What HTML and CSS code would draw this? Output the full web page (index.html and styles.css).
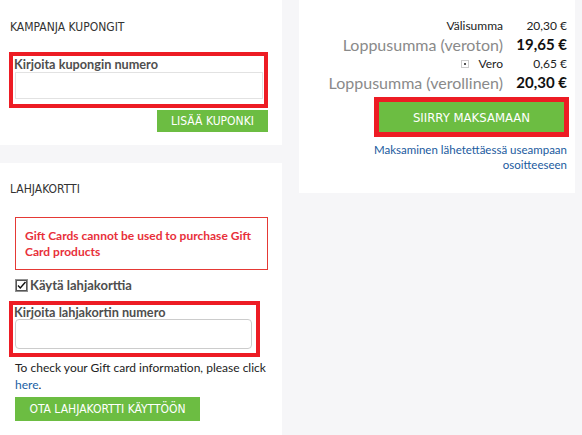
FILE: index.html
```html
<html>
  <head>
    <meta charset="UTF-8" />
    <meta name="viewport" content="width=device-width, initial-scale=1.0" />
    <title>Ostoskori</title>

    <link rel="stylesheet" href="styles.css">
  </head>

  <body>
    <div class="page">
      <div class="left-column">
        <div class="panel coupon-panel">
          <div class="panel-title">KAMPANJA KUPONGIT</div>

          <div class="highlight coupon-field">
            <div class="field-label">Kirjoita kupongin numero</div>
            <input type="text" class="text-input coupon-input" />
          </div>

          <div class="actions">
            <button class="btn btn-coupon">LISÄÄ KUPONKI</button>
          </div>
        </div>

        <div class="panel gift-panel">
          <div class="panel-title">LAHJAKORTTI</div>

          <div class="error-box">Gift Cards cannot be used to purchase Gift Card products</div>

          <div class="check-row">
            <svg class="check-box" width="13" height="13" viewBox="0 0 13 13">
              <rect x="0.5" y="0.5" width="12" height="12" fill="#fff" stroke="#222" stroke-dasharray="1 1" />
              <rect x="1.5" y="1.5" width="10" height="10" fill="none" stroke="#555" />
              <path d="M3 6.5 L5.3 9 L10.5 3" fill="none" stroke="#111" stroke-width="1.4" />
            </svg>
            <span class="check-label">Käytä lahjakorttia</span>
          </div>

          <div class="highlight gift-field">
            <div class="field-label">Kirjoita lahjakortin numero</div>
            <input type="text" class="text-input gift-input" />
          </div>

          <div class="gift-info">To check your Gift card information, please click <a href="" class="link">here</a>.</div>

          <button class="btn btn-gift">OTA LAHJAKORTTI KÄYTTÖÖN</button>
        </div>
      </div>

      <div class="panel summary-panel">
        <div class="totals">
          <div class="total-label small">Välisumma</div>
          <div class="total-value small">20,30 €</div>

          <div class="total-label large">Loppusumma (veroton)</div>
          <div class="total-value large">19,65 €</div>

          <div class="total-label small">
            <svg class="tax-toggle" width="8" height="8" viewBox="0 0 8 8">
              <rect x="0.5" y="0.5" width="7" height="7" fill="none" stroke="#999" stroke-dasharray="1 1" />
              <rect x="3" y="3" width="2" height="2" fill="#555" />
            </svg>
            Vero
          </div>
          <div class="total-value small">0,65 €</div>

          <div class="total-label large">Loppusumma (verollinen)</div>
          <div class="total-value large">20,30 €</div>
        </div>

        <div class="checkout-highlight">
          <button class="btn btn-checkout">SIIRRY MAKSAMAAN</button>
        </div>

        <a href="" class="multi-link">Maksaminen lähetettäessä useampaan<br>osoitteeseen</a>
      </div>
    </div>
  </body>
</html>
```

FILE: styles.css
```css
body {
  margin: 0;
  background-color: #f6f6f8;
  font-family: Lato, "Noto Sans", sans-serif;
  color: #222;
}

.page {
  display: flex;
  flex-direction: row;
  align-items: flex-start;
  gap: 17px;
}

.left-column {
  width: 282px;
  display: flex;
  flex-direction: column;
  gap: 18px;
}

.panel {
  background-color: #fff;
  box-sizing: border-box;
}

.panel-title {
  font-family: "Liberation Sans Narrow", "DejaVu Sans Condensed", sans-serif;
  font-size: 12px;
  line-height: 16px;
  color: #333;
  margin-left: 1px;
}

.highlight {
  border: 4px solid #ed1c24;
  display: flex;
  flex-direction: column;
  align-items: flex-start;
}

.field-label {
  font-size: 12.7px;
  font-weight: bold;
  color: #4e4e4e;
  margin-left: -1px;
}

.text-input {
  box-sizing: border-box;
  background-color: #fff;
  outline: none;
}

.btn {
  border: none;
  background-color: #6cbd42;
  color: #fff;
  font-family: "Liberation Sans Narrow", "DejaVu Sans Condensed", sans-serif;
  padding: 0;
  cursor: pointer;
}

/* kupongit */
.coupon-panel {
  height: 145px;
  padding: 19px 14px 0 9px;
}

.coupon-field {
  margin-top: 17px;
  padding: 0 5px 5px 2px;
}

.coupon-field .field-label {
  line-height: 16px;
}

.coupon-input {
  width: 248px;
  height: 27px;
  border: 1px solid #e2e2e2;
}

.actions {
  display: flex;
  justify-content: flex-end;
  margin-top: 2px;
}

.btn-coupon {
  width: 111px;
  height: 22px;
  font-size: 12px;
}

/* lahjakortti */
.gift-panel {
  height: 272px;
  padding: 18px 0 0 9px;
}

.error-box {
  width: 253px;
  box-sizing: border-box;
  margin: 20px 0 0 6px;
  padding: 10px 6px 9px 9px;
  border: 1px solid #e53935;
  color: #e8303a;
  font-size: 12px;
  font-weight: bold;
  line-height: 16px;
}

.check-row {
  display: flex;
  flex-direction: row;
  align-items: center;
  margin: 7px 0 0 6px;
  height: 16px;
}

.check-box {
  margin-right: 2px;
}

.check-label {
  font-size: 13px;
  font-weight: bold;
  color: #4e4e4e;
}

.gift-field {
  width: 251px;
  box-sizing: border-box;
  margin-top: 8px;
  padding: 0 4px 4px 2px;
}

.gift-field .field-label {
  line-height: 14px;
}

.gift-input {
  width: 237px;
  height: 30px;
  border: 1px solid #ccc;
  border-radius: 4px;
}

.gift-info {
  margin: 2px 0 0 6px;
  font-size: 12px;
  line-height: 17px;
  width: 262px;
}

.link {
  color: #1a5fa5;
  text-decoration: none;
}

.btn-gift {
  display: block;
  margin: 4px 0 0 6px;
  width: 185px;
  height: 24px;
  font-size: 12px;
}

/* yhteenveto */
.summary-panel {
  width: 276px;
  height: 193px;
  padding: 16px 8px 0 0;
  display: flex;
  flex-direction: column;
  align-items: flex-end;
}

.totals {
  display: grid;
  grid-template-columns: auto 64px;
  line-height: 19px;
  text-align: right;
}

.total-label {
  display: flex;
  align-items: center;
  justify-content: flex-end;
}

.small {
  font-size: 12px;
  color: #222;
}

.total-label.large {
  font-size: 16px;
  color: #8a8a8a;
}

.total-value.large {
  font-size: 15px;
  font-weight: bold;
  color: #111;
}

.tax-toggle {
  margin-right: 10px;
}

.checkout-highlight {
  margin: 5px -2px 0 0;
  border: 5px solid #ed1c24;
}

.btn-checkout {
  display: block;
  width: 185px;
  height: 30px;
  font-size: 13px;
}

.multi-link {
  margin-top: 5px;
  font-size: 11.5px;
  line-height: 15px;
  text-align: right;
  color: #1a5a9e;
  text-decoration: none;
}
```
